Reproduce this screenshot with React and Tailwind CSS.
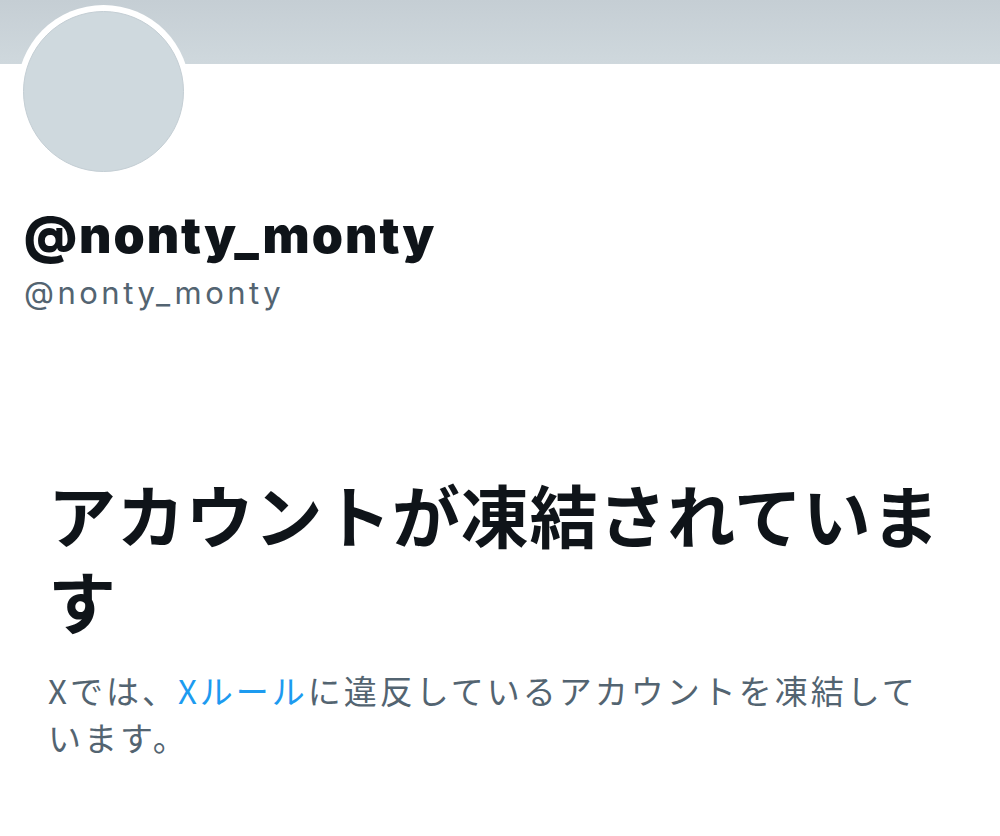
export default function App() {
  return (
    <div className="w-[1000px] h-[836px] overflow-hidden bg-white">
      <div className="h-[64px] bg-gradient-to-b from-[#c5ced4] to-[#cfd8dd]" />

      <div className="-mt-[59px] ml-[17px] w-[173px] h-[173px] rounded-full bg-white p-[6px]">
        <div className="w-full h-full rounded-full bg-[#cfd9de] border border-[#c4ced4]" />
      </div>

      <div className="pl-[24px] mt-[27px] font-['Inter',sans-serif]">
        <div className="text-[50px] leading-[60px] font-black tracking-[2px] text-[#0f1419]">
          @nonty_monty
        </div>
        <div className="mt-[7px] text-[31px] leading-[42px] tracking-[3.5px] text-[#536471]">
          @nonty_monty
        </div>
      </div>

      <div className="pl-[48px] mt-[157px] font-['Noto_Sans_CJK_JP',sans-serif]">
        <h1 className="text-[68px] leading-[86px] font-bold tracking-[0.8px] text-[#0f1419]">
          アカウントが凍結されていま
          <br />す
        </h1>
        <p className="mt-[24px] text-[33px] leading-[47px] tracking-[3px] text-[#536471]">
          Xでは、<span className="text-[#1d9bf0]">Xルール</span>に違反しているアカウントを凍結して
          <br />
          います。
        </p>
      </div>
    </div>
  );
}
